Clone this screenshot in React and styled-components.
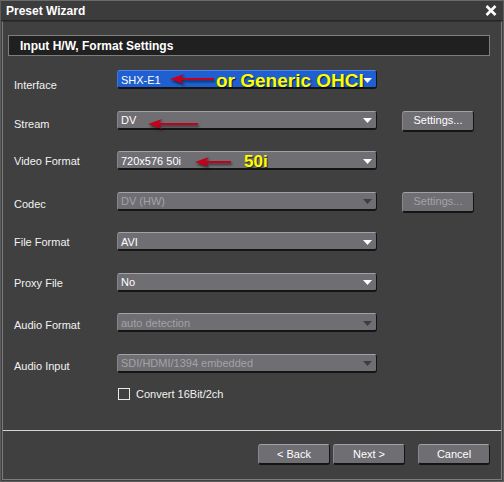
import styled, { createGlobalStyle } from 'styled-components';

const GlobalStyle = createGlobalStyle`
  html, body {
    margin: 0;
    padding: 0;
    background: #404040;
  }
  * {
    box-sizing: border-box;
  }
`;

const Window = styled.div`
  width: 504px;
  height: 482px;
  display: flex;
  flex-direction: column;
  background: #404040;
  border: 1px solid #5c5c5c;
  border-top-color: #6a6a6a;
  font-family: "Liberation Sans", Arial, sans-serif;
  font-size: 11px;
  color: #f2f2f2;
`;

const TitleBar = styled.div`
  height: 20px;
  display: flex;
  align-items: center;
  justify-content: space-between;
  padding: 0 6px 0 5px;
  background: #3c3c3c;
  border-bottom: 1px solid #262626;
`;

const Title = styled.div`
  font-weight: bold;
  font-size: 12px;
  color: #ffffff;
`;

const Body = styled.div`
  flex: 1;
  display: flex;
  flex-direction: column;
  margin: 0 1px 1px 1px;
  border: 1px solid #7c7c7c;
  border-top-color: #303030;
  padding-top: 13px;
`;

const Header = styled.div`
  height: 21px;
  margin: 0 11px 0 5px;
  display: flex;
  align-items: center;
  padding-left: 11px;
  background: #202020;
  border: 1px solid #7e7e7e;
  font-weight: bold;
  font-size: 12px;
  color: #ffffff;
`;

const Form = styled.div`
  display: flex;
  flex-direction: column;
  gap: 21.5px;
  margin: 14px 0 0 11px;
`;

const Row = styled.div`
  display: grid;
  grid-template-columns: 103px 260px 97px;
  height: 19px;
  align-items: start;
`;

const Label = styled.div`
  padding-top: ${(p) => p.$drop || 5}px;
  line-height: 14px;
  white-space: nowrap;
`;

const Select = styled.div`
  position: relative;
  height: 19px;
  display: flex;
  align-items: center;
  justify-content: space-between;
  padding: 1px 4px 0 3px;
  border-radius: 3px;
  background: ${(p) => (p.$active ? '#1f5fd0' : '#6f6e73')};
  border-top: 1px solid ${(p) => (p.$active ? '#4f86e6' : '#a2a2a6')};
  border-left: 1px solid ${(p) => (p.$active ? '#3a74dc' : '#858589')};
  border-right: 1px solid #141414;
  border-bottom: 2px solid #141414;
  color: ${(p) => (p.$disabled ? '#a3a3a6' : '#ffffff')};
  white-space: nowrap;
`;

const Arrow = styled.svg`
  flex: none;
  margin-top: 1px;
`;

const Button = styled.button`
  height: 21px;
  width: 72px;
  padding: 0 0 1px;
  border-radius: 3px;
  background: #6f6e73;
  border-top: 1px solid #a2a2a6;
  border-left: 1px solid #88888c;
  border-right: 1px solid #141414;
  border-bottom: 2px solid #141414;
  font-family: "Liberation Sans", Arial, sans-serif;
  font-size: 11px;
  color: ${(p) => (p.disabled ? '#a3a3a6' : '#ffffff')};
`;

const SideButton = styled(Button)`
  margin-left: 25px;
`;

const CheckRow = styled.label`
  display: flex;
  align-items: center;
  gap: 6px;
  margin: 15px 0 0 115px;
  height: 12px;
`;

const Box = styled.span`
  width: 12px;
  height: 12px;
  border: 1px solid #e8e8e8;
`;

const Spacer = styled.div`
  flex: 1;
`;

const Footer = styled.div`
  display: flex;
  justify-content: flex-end;
  align-items: flex-start;
  height: 49px;
  padding: 13px 11px 0 0;
  border-top: 1px solid #d4d4d4;
`;

const NavGroup = styled.div`
  display: flex;
  gap: 3px;
  margin-right: 13px;
`;

const Note = styled.div`
  position: absolute;
  left: ${(p) => p.$left}px;
  top: ${(p) => p.$top}px;
  font-family: "Liberation Sans", Arial, sans-serif;
  font-weight: bold;
  font-size: ${(p) => p.$size}px;
  line-height: 1;
  color: #ffff00;
  text-shadow: 1px 1px 1px rgba(0, 0, 0, 0.7);
  white-space: nowrap;
  pointer-events: none;
`;

const RedArrowSvg = styled.svg`
  position: absolute;
  left: ${(p) => p.$left}px;
  top: ${(p) => p.$top}px;
  overflow: visible;
  filter: drop-shadow(1px 2px 1px rgba(0, 0, 0, 0.55));
  pointer-events: none;
`;

const RedArrow = ({ left, top, length }) => (
  <RedArrowSvg $left={left} $top={top} width={length} height="10" viewBox={`0 0 ${length} 10`}>
    <polygon points={`0,5 14,0 11,4 ${length},4 ${length},6 11,6 14,10`} fill="#c4001a" />
  </RedArrowSvg>
);

const DropArrow = ({ disabled }) => (
  <Arrow width="9" height="5" viewBox="0 0 9 5">
    <polygon points="0,0 9,0 4.5,5" fill={disabled ? '#3e3e40' : '#ffffff'} />
  </Arrow>
);

const Dropdown = ({ value, disabled, active, children }) => (
  <Select $disabled={disabled} $active={active}>
    <span>{value}</span>
    <DropArrow disabled={disabled} />
    {children}
  </Select>
);

const rows = [
  { label: 'Interface', value: 'SHX-E1', active: true, drop: 8 },
  { label: 'Stream', value: 'DV', settings: true, drop: 6 },
  { label: 'Video Format', value: '720x576 50i', drop: 3 },
  { label: 'Codec', value: 'DV (HW)', disabled: true, settings: true, settingsDisabled: true, drop: 5 },
  { label: 'File Format', value: 'AVI', drop: 3 },
  { label: 'Proxy File', value: 'No', drop: 3 },
  { label: 'Audio Format', value: 'auto detection', disabled: true, drop: 5 },
  { label: 'Audio Input', value: 'SDI/HDMI/1394 embedded', disabled: true, drop: 5 },
];

const notes = {
  Interface: (
    <>
      <RedArrow left={52} top={3} length={44} />
      <Note $left={98} $top={0} $size={19}>or Generic OHCI</Note>
    </>
  ),
  Stream: <RedArrow left={30} top={7} length={50} />,
  'Video Format': (
    <>
      <RedArrow left={77} top={5} length={36} />
      <Note $left={126} $top={1} $size={17}>50i</Note>
    </>
  ),
};

const App = () => {
  return (
    <>
      <GlobalStyle />
      <Window>
        <TitleBar>
          <Title>Preset Wizard</Title>
          <svg width="12" height="11" viewBox="0 0 12 11">
            <path d="M1.5 1 L10.5 10 M10.5 1 L1.5 10" stroke="#ffffff" strokeWidth="2.6" />
          </svg>
        </TitleBar>
        <Body>
          <Header>Input H/W, Format Settings</Header>
          <Form>
            {rows.map((r) => (
              <Row key={r.label}>
                <Label $drop={r.drop}>{r.label}</Label>
                <Dropdown value={r.value} disabled={r.disabled} active={r.active}>
                  {notes[r.label]}
                </Dropdown>
                {r.settings && <SideButton disabled={r.settingsDisabled}>Settings...</SideButton>}
              </Row>
            ))}
          </Form>
          <CheckRow>
            <Box />
            Convert 16Bit/2ch
          </CheckRow>
          <Spacer />
          <Footer>
            <NavGroup>
              <Button>&lt; Back</Button>
              <Button>Next &gt;</Button>
            </NavGroup>
            <Button>Cancel</Button>
          </Footer>
        </Body>
      </Window>
    </>
  );
};

export default App;
